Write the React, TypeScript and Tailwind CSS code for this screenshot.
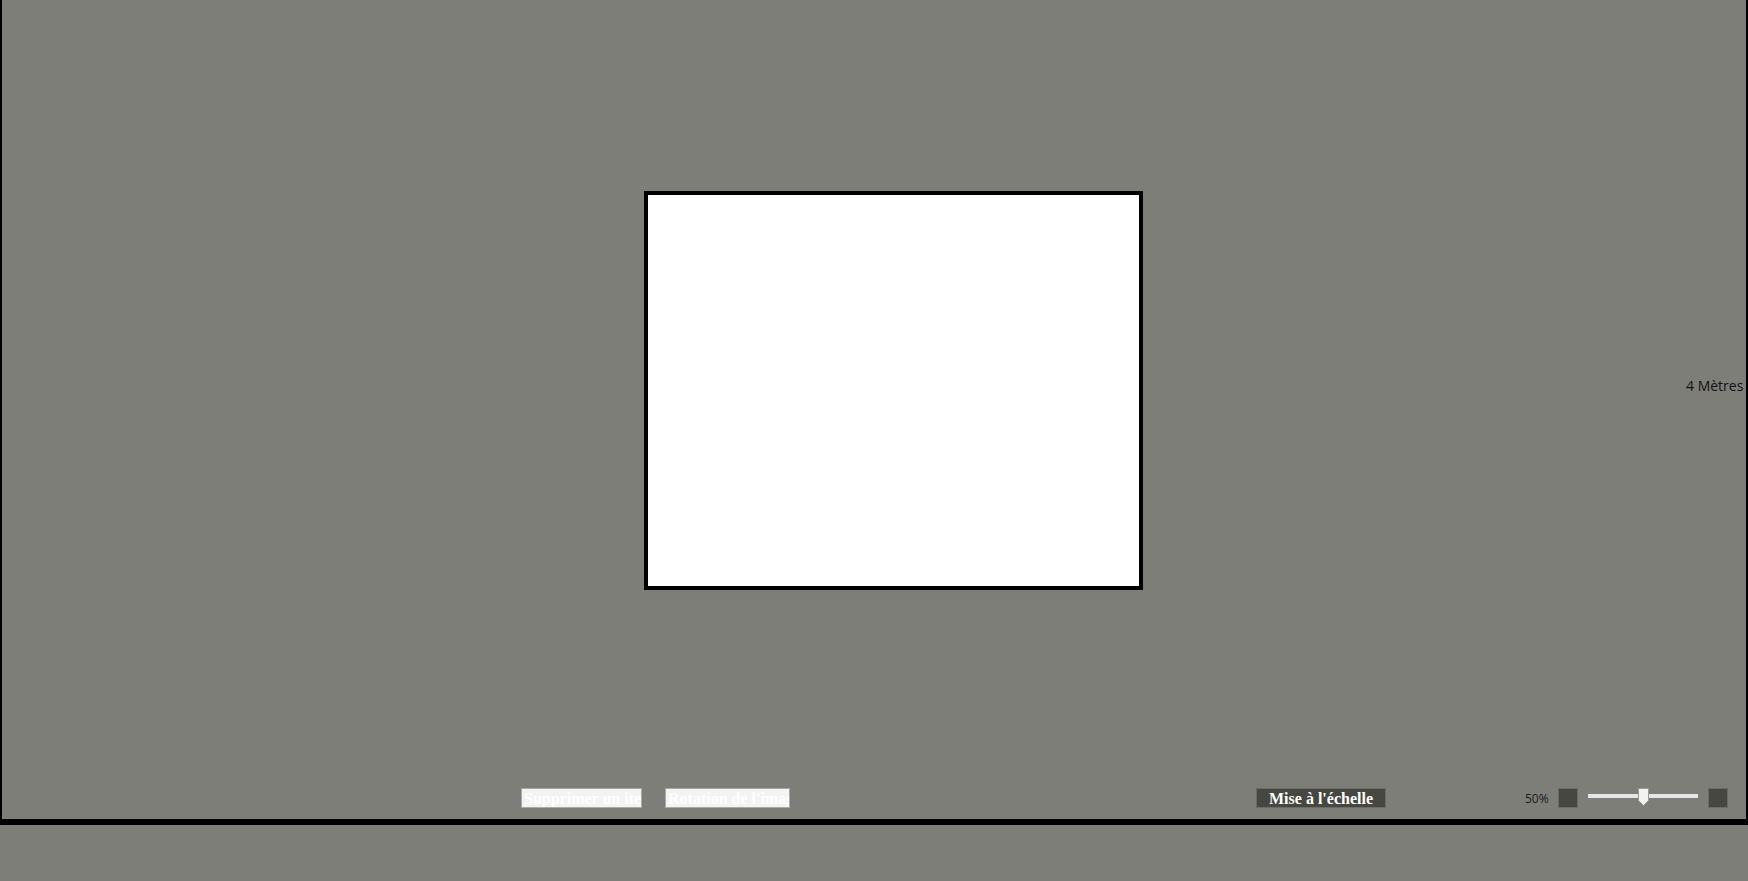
import React from "react";

export default function App() {
  return (
    <div className="w-[1748px] h-[881px] bg-[#7e7e79] overflow-hidden" style={{ fontFamily: '"Open Sans", sans-serif' }}>
      <div className="w-[1748px] h-[825px] border-l-2 border-r-2 border-b-[6px] border-black flex flex-col overflow-hidden">
        {/* canvas area */}
        <div className="relative h-[788px] shrink-0">
          <div className="absolute left-[642px] top-[191px] w-[499px] h-[399px] border-4 border-black bg-white" />
          <div className="absolute left-[1684px] top-[376px] whitespace-nowrap text-[14px] text-[#111] leading-[20px]">
            4 Mètres
          </div>
        </div>
        {/* toolbar */}
        <div className="flex items-start h-[31px]">
          <button
            className="ml-[519px] w-[121px] h-[20px] bg-[#f3f3f3] border border-[#a8aaa8] text-white font-bold text-[16px] leading-[20px] overflow-hidden whitespace-nowrap text-left px-[2px]"
            style={{ fontFamily: '"Liberation Serif", serif' }}
          >
            Supprimer un item
          </button>
          <button
            className="ml-[23px] w-[125px] h-[20px] bg-[#f3f3f3] border border-[#a8aaa8] text-white font-bold text-[16px] leading-[20px] overflow-hidden whitespace-nowrap text-left px-[2px]"
            style={{ fontFamily: '"Liberation Serif", serif' }}
          >
            Rotation de l'image
          </button>
          <button
            className="ml-[466px] w-[130px] h-[20px] bg-[#474741] border border-[#6b6b65] text-white font-bold text-[16px] leading-[20px] overflow-hidden whitespace-nowrap text-center"
            style={{ fontFamily: '"Liberation Serif", serif' }}
          >
            Mise à l'échelle
          </button>
          <span className="ml-[139px] w-[33px] h-[20px] text-[12px] leading-[22px] text-[#1a1a1a]">50%</span>
          <div className="w-[20px] h-[20px] bg-[#474741] border border-[#6b6b65]" />
          <div className="relative ml-[10px] w-[110px] h-[20px]">
            <div className="absolute left-0 top-[6px] w-[110px] h-[4px] bg-[#e6e6e6]" />
            <svg className="absolute left-[50px] top-0" width="11" height="18" viewBox="0 0 11 18">
              <path d="M0.5 0.5 H10.5 V12.5 L5.5 17.5 L0.5 12.5 Z" fill="#f2f2f2" stroke="#9a9a96" strokeWidth="1" />
            </svg>
          </div>
          <div className="ml-[10px] w-[20px] h-[20px] bg-[#474741] border border-[#6b6b65]" />
        </div>
      </div>
    </div>
  );
}
